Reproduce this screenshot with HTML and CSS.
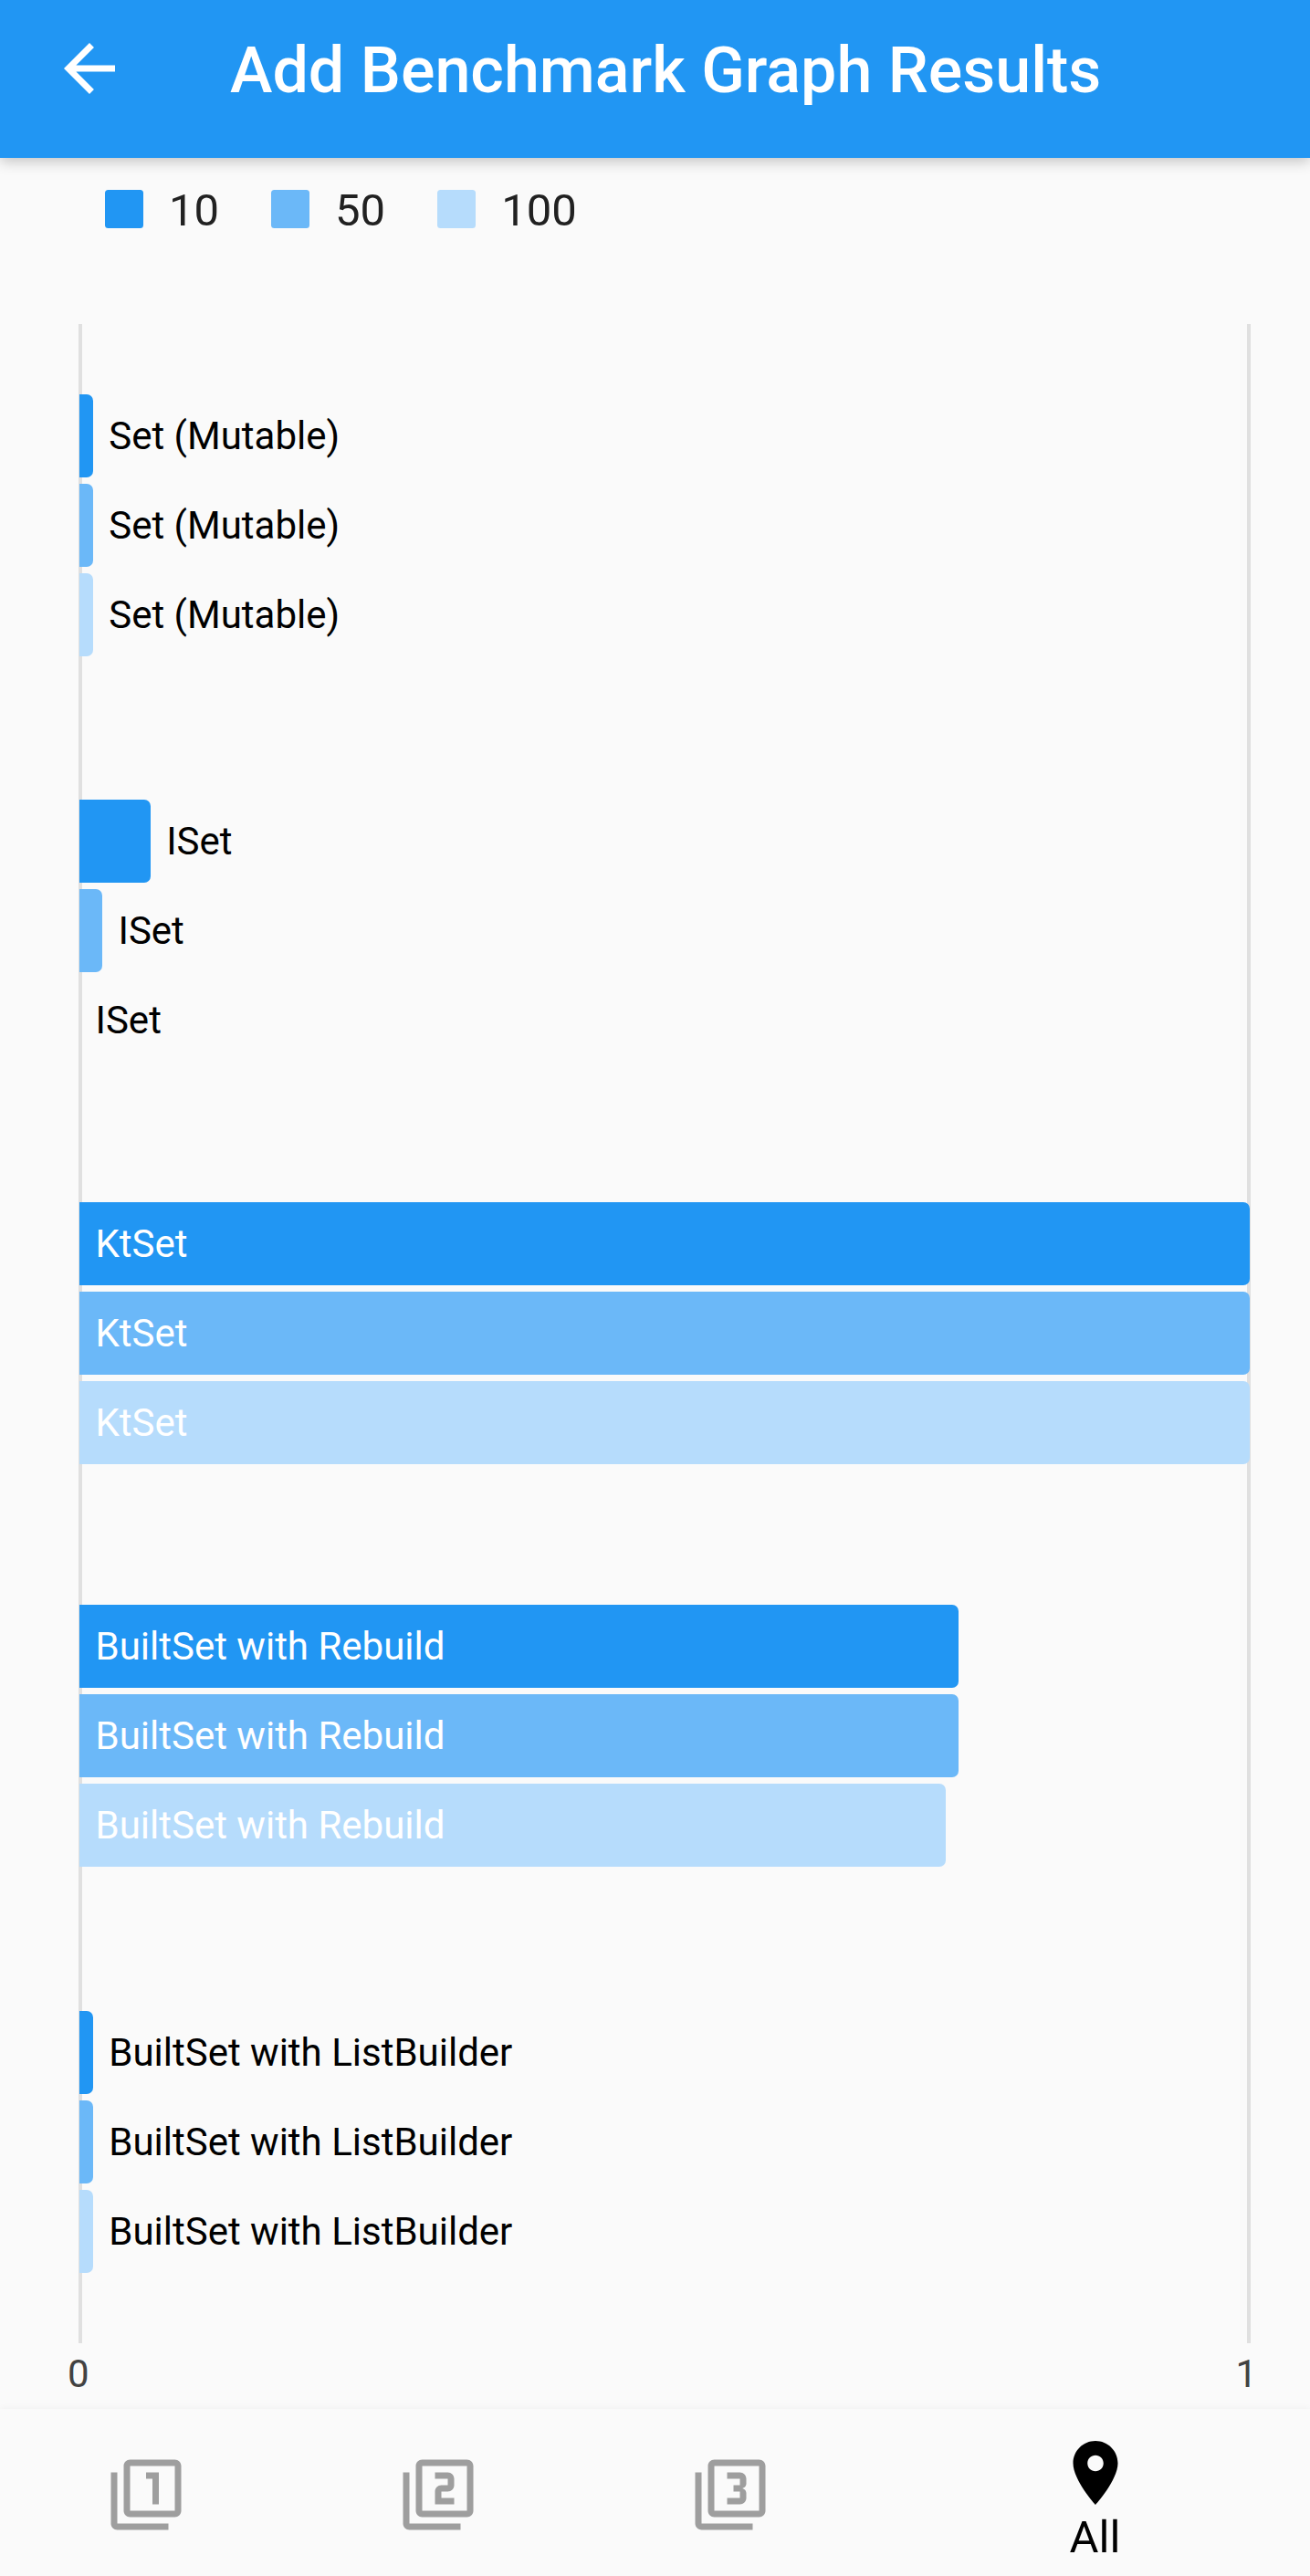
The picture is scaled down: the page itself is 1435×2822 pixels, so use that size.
FILE: index.html
```html
<!DOCTYPE html>
<html lang="en">
<head>
    <meta charset="UTF-8">
    <meta name="viewport" content="width=device-width, initial-scale=1.0">
    <title>Add Benchmark Graph Results</title>
    <link rel="stylesheet" href="styles.css">
</head>
<body>
    <header class="app-bar">
        <svg class="back-icon" viewBox="0 0 24 24"><path d="M20 11H7.83l5.59-5.59L12 4l-8 8 8 8 1.41-1.41L7.83 13H20v-2z"/></svg>
        <h1 class="app-title">Add Benchmark Graph Results</h1>
    </header>

    <section class="legend">
        <div class="legend-item"><span class="swatch c10"></span><span class="legend-text">10</span></div>
        <div class="legend-item"><span class="swatch c50"></span><span class="legend-text">50</span></div>
        <div class="legend-item"><span class="swatch c100"></span><span class="legend-text">100</span></div>
    </section>

    <main class="chart">
        <div class="plot">
            <div class="group">
                <div class="row"><div class="bar c10" style="width: 1.15%"></div><span class="label">Set (Mutable)</span></div>
                <div class="row"><div class="bar c50" style="width: 1.15%"></div><span class="label">Set (Mutable)</span></div>
                <div class="row"><div class="bar c100" style="width: 1.15%"></div><span class="label">Set (Mutable)</span></div>
            </div>
            <div class="group gap-wide">
                <div class="row"><div class="bar c10" style="width: 6.06%"></div><span class="label">ISet</span></div>
                <div class="row"><div class="bar c50" style="width: 1.95%"></div><span class="label">ISet</span></div>
                <div class="row"><span class="label">ISet</span></div>
            </div>
            <div class="group">
                <div class="row"><div class="bar c10" style="width: 100%"><span class="label inside">KtSet</span></div></div>
                <div class="row"><div class="bar c50" style="width: 100%"><span class="label inside">KtSet</span></div></div>
                <div class="row"><div class="bar c100" style="width: 100%"><span class="label inside">KtSet</span></div></div>
            </div>
            <div class="group">
                <div class="row"><div class="bar c10" style="width: 75.1%"><span class="label inside">BuiltSet with Rebuild</span></div></div>
                <div class="row"><div class="bar c50" style="width: 75.1%"><span class="label inside">BuiltSet with Rebuild</span></div></div>
                <div class="row"><div class="bar c100" style="width: 74%"><span class="label inside">BuiltSet with Rebuild</span></div></div>
            </div>
            <div class="group gap-wide">
                <div class="row"><div class="bar c10" style="width: 1.15%"></div><span class="label">BuiltSet with ListBuilder</span></div>
                <div class="row"><div class="bar c50" style="width: 1.15%"></div><span class="label">BuiltSet with ListBuilder</span></div>
                <div class="row"><div class="bar c100" style="width: 1.15%"></div><span class="label">BuiltSet with ListBuilder</span></div>
            </div>
        </div>
        <div class="ticks"><span>0</span><span>1</span></div>
    </main>

    <nav class="bottom-nav">
        <div class="tab">
            <svg class="tab-icon" viewBox="0 0 24 24"><path d="M3 5H1v16c0 1.1.9 2 2 2h16v-2H3V5zm11 10h2V5h-4v2h2v8zm7-14H7c-1.1 0-2 .9-2 2v14c0 1.1.9 2 2 2h14c1.1 0 2-.9 2-2V3c0-1.1-.9-2-2-2zm0 16H7V3h14v14z"/></svg>
        </div>
        <div class="tab">
            <svg class="tab-icon" viewBox="0 0 24 24"><path d="M3 5H1v16c0 1.1.9 2 2 2h16v-2H3V5zm18-4H7c-1.1 0-2 .9-2 2v14c0 1.1.9 2 2 2h14c1.1 0 2-.9 2-2V3c0-1.1-.9-2-2-2zm0 16H7V3h14v14zm-4-4h-4v-2h2c1.1 0 2-.89 2-2V7c0-1.11-.9-2-2-2h-4v2h4v2h-2c-1.1 0-2 .89-2 2v4h6v-2z"/></svg>
        </div>
        <div class="tab">
            <svg class="tab-icon" viewBox="0 0 24 24"><path d="M21 1H7c-1.1 0-2 .9-2 2v14c0 1.1.9 2 2 2h14c1.1 0 2-.9 2-2V3c0-1.1-.9-2-2-2zm0 16H7V3h14v14zM3 5H1v16c0 1.1.9 2 2 2h16v-2H3V5zm14 8v-1.5c0-.83-.67-1.5-1.5-1.5.83 0 1.5-.67 1.5-1.5V7c0-1.11-.9-2-2-2h-4v2h4v2h-2v2h2v2h-4v2h4c1.1 0 2-.89 2-2z"/></svg>
        </div>
        <div class="tab active">
            <svg class="tab-icon" viewBox="0 0 24 24"><path d="M12 2C8.13 2 5 5.13 5 9c0 5.25 7 13 7 13s7-7.75 7-13c0-3.87-3.13-7-7-7zm0 9.5c-1.38 0-2.5-1.12-2.5-2.5s1.12-2.5 2.5-2.5 2.5 1.12 2.5 2.5-1.12 2.5-2.5 2.5z"/></svg>
            <span class="tab-label">All</span>
        </div>
    </nav>
</body>
</html>
```

FILE: styles.css
```css
* {
    box-sizing: border-box;
}
html, body {
    margin: 0;
    height: 2822px;
}
body {
    display: flex;
    flex-direction: column;
    overflow: hidden;
    background: #fafafa;
    font-family: Roboto, sans-serif;
}
.app-bar {
    display: flex;
    align-items: center;
    height: 173px;
    padding: 33px 0 56px 56px;
    background: #2196f3;
    box-shadow: 0 4px 14px rgba(0, 0, 0, 0.22);
    position: relative;
    z-index: 1;
}
.back-icon {
    width: 84px;
    height: 84px;
    fill: #fff;
}
.app-title {
    margin: 4px 0 0 112px;
    font-size: 70px;
    font-weight: 500;
    color: #fff;
    white-space: nowrap;
}
.legend {
    display: flex;
    align-items: center;
    gap: 57px;
    height: 42px;
    margin: 35px 0 0 115px;
    font-size: 49px;
    color: #212121;
}
.legend-item {
    display: flex;
    align-items: center;
    gap: 28px;
}
.legend-text {
    padding-top: 2px;
}
.swatch {
    width: 42px;
    height: 42px;
    border-radius: 3.5px;
}
.c10 {
    background: #2196f3;
}
.c50 {
    background: #6bb8f8;
}
.c100 {
    background: #b6dcfc;
}
.chart {
    display: flex;
    flex-direction: column;
    margin-top: 105px;
    height: 2284px;
}
.plot {
    display: flex;
    flex-direction: column;
    width: 1284px;
    height: 2212px;
    margin-left: 86px;
    padding-top: 77px;
    border-left: 4px solid #e0e0e0;
    border-right: 4px solid #e0e0e0;
}
.group {
    display: flex;
    flex-direction: column;
    gap: 7px;
    margin: 154px -3px 0;
}
.group:first-child {
    margin-top: 0;
}
.group.gap-wide {
    margin-top: 157px;
}
.group.gap-wide:last-child {
    margin-top: 158px;
}
.row {
    display: flex;
    align-items: center;
    height: 91px;
}
.bar {
    display: flex;
    align-items: center;
    height: 91px;
    border-radius: 0 7px 7px 0;
}
.label {
    padding-left: 17.5px;
    font-size: 42px;
    color: #000;
    white-space: nowrap;
}
.label.inside {
    color: #fff;
}
.ticks {
    display: flex;
    justify-content: space-between;
    width: 1303px;
    margin: 9px 0 0 74px;
    font-size: 42px;
    line-height: 50px;
    color: #424242;
}
.bottom-nav {
    display: grid;
    grid-template-columns: 320px 320px 320px 1fr;
    height: 183px;
    margin-top: auto;
    background: #fafafa;
    box-shadow: 0 -1px 7px rgba(0, 0, 0, 0.04);
}
.tab {
    display: flex;
    flex-direction: column;
    align-items: center;
    padding-top: 52px;
    fill: #9e9e9e;
}
.tab.active {
    padding: 28px 0 0 4px;
    fill: #000;
}
.tab-icon {
    width: 84px;
    height: 84px;
}
.tab-label {
    margin-top: 1px;
    font-size: 49px;
    line-height: 56px;
    color: #000;
}
```
